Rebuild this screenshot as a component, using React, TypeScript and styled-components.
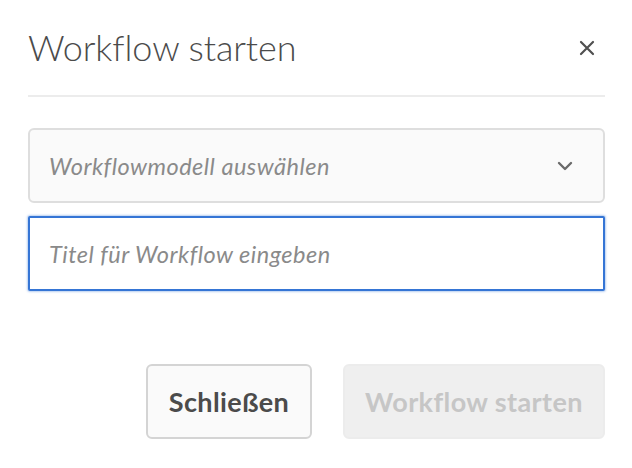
import React from "react";
import styled, { createGlobalStyle } from "styled-components";

const Global = createGlobalStyle`
  html, body { margin: 0; padding: 0; background: #ffffff; }
  body { font-family: Lato, "Open Sans", sans-serif; }
`;

const Dialog = styled.div`
  width: 632px;
  height: 468px;
  box-sizing: border-box;
  padding: 0 27px 0 28px;
  display: flex;
  flex-direction: column;
  background: #fff;
`;

const Header = styled.div`
  display: flex;
  align-items: center;
  justify-content: space-between;
  height: 95px;
  border-bottom: 2px solid #ececec;
  box-sizing: content-box;
`;

const Title = styled.h1`
  margin: 0;
  font-family: Lato, sans-serif;
  font-weight: 300;
  font-size: 36px;
  color: #4b4b4b;
  letter-spacing: -0.1px;
  line-height: 1;
  padding-bottom: 2px;
`;

const CloseButton = styled.button`
  border: 0;
  background: transparent;
  padding: 0;
  margin-right: 9px;
  width: 18px;
  height: 18px;
  display: flex;
  align-items: center;
  justify-content: center;
  color: #505050;
  cursor: pointer;
`;

const Form = styled.div`
  display: flex;
  flex-direction: column;
  gap: 13px;
  margin-top: 31px;
`;

const Field = styled.div<{ $focused?: boolean }>`
  height: 75px;
  box-sizing: border-box;
  display: flex;
  align-items: center;
  justify-content: space-between;
  padding: 0 30px 0 19px;
  background: ${(p) => (p.$focused ? "#ffffff" : "#fafafa")};
  border: 2px solid ${(p) => (p.$focused ? "#3575d5" : "#dedede")};
  border-radius: ${(p) => (p.$focused ? "2px" : "6px")};
  box-shadow: ${(p) => (p.$focused ? "0 0 2px 1px rgba(53,117,213,0.35)" : "none")};
`;

const Placeholder = styled.span`
  font-family: Lato, sans-serif;
  font-style: italic;
  font-size: 23.5px;
  letter-spacing: 0.5px;
  color: #8a8a8a;
`;

const Footer = styled.div`
  display: flex;
  justify-content: flex-end;
  gap: 31px;
  margin-top: 73px;
`;

const Button = styled.button<{ $disabled?: boolean; $w: number }>`
  width: ${(p) => p.$w}px;
  height: 75px;
  box-sizing: border-box;
  border-radius: 6px;
  font-family: Lato, sans-serif;
  font-weight: 700;
  font-size: 27px;
  letter-spacing: 0.4px;
  background: ${(p) => (p.$disabled ? "#efefef" : "#fafafa")};
  border: 2px solid ${(p) => (p.$disabled ? "#ececec" : "#d4d4d4")};
  color: ${(p) => (p.$disabled ? "#c6c6c6" : "#4b4b4b")};
  padding: 0;
`;

export default function App() {
  return (
    <>
      <Global />
      <Dialog>
        <Header>
          <Title>Workflow starten</Title>
          <CloseButton aria-label="Schließen">
            <svg width="16" height="16" viewBox="0 0 16 16">
              <path d="M2 2 L14 14 M14 2 L2 14" stroke="currentColor" strokeWidth="2.2" strokeLinecap="round" />
            </svg>
          </CloseButton>
        </Header>
        <Form>
          <Field>
            <Placeholder>Workflowmodell auswählen</Placeholder>
            <svg width="16" height="10" viewBox="0 0 16 10">
              <path d="M2 2 L8 8 L14 2" stroke="#6a6a6a" strokeWidth="2.4" fill="none" strokeLinecap="round" strokeLinejoin="round" />
            </svg>
          </Field>
          <Field $focused>
            <Placeholder>Titel für Workflow eingeben</Placeholder>
          </Field>
        </Form>
        <Footer>
          <Button $w={166}>Schließen</Button>
          <Button $w={262} $disabled>Workflow starten</Button>
        </Footer>
      </Dialog>
    </>
  );
}
